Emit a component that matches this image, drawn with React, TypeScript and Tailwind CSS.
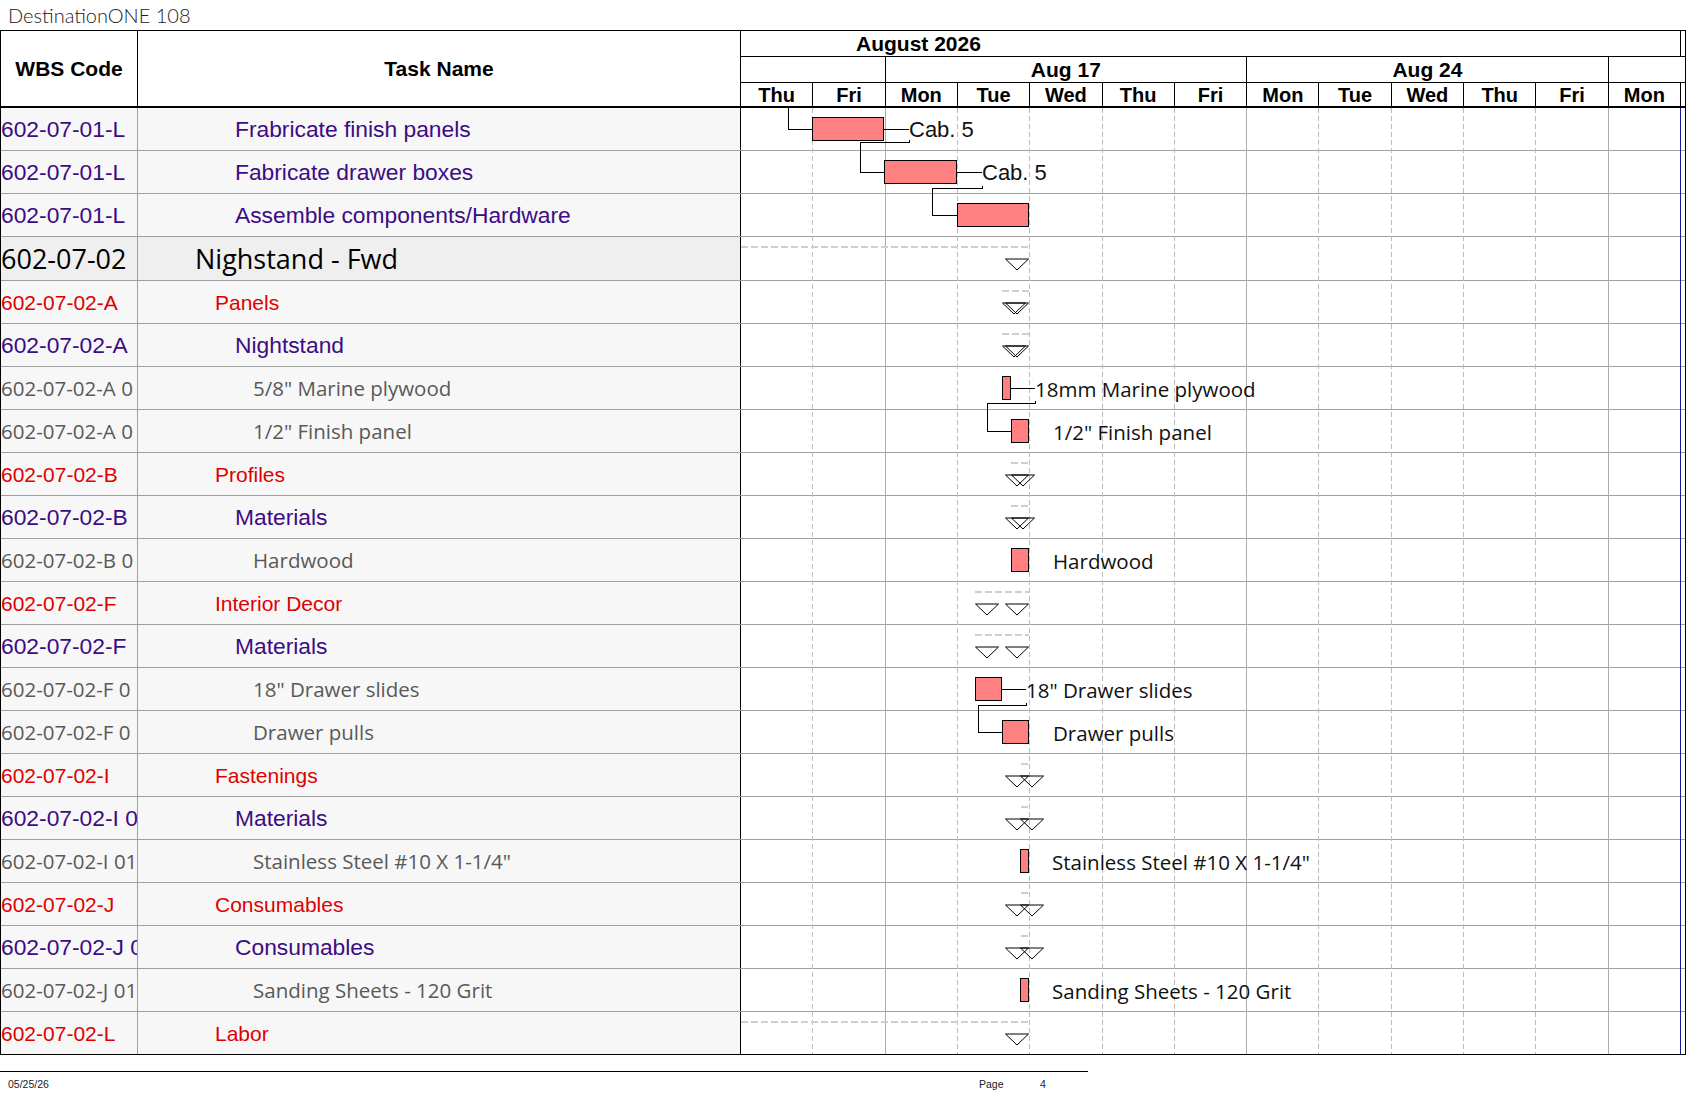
import React from 'react';

type Kind = 'p' | 'r' | 'g' | 's';

const rows: { wbs: string; name: string; kind: Kind }[] = [
  { wbs: '602-07-01-L', name: 'Frabricate finish panels', kind: 'p' },
  { wbs: '602-07-01-L', name: 'Fabricate drawer boxes', kind: 'p' },
  { wbs: '602-07-01-L', name: 'Assemble components/Hardware', kind: 'p' },
  { wbs: '602-07-02', name: 'Nighstand - Fwd', kind: 's' },
  { wbs: '602-07-02-A', name: 'Panels', kind: 'r' },
  { wbs: '602-07-02-A', name: 'Nightstand', kind: 'p' },
  { wbs: '602-07-02-A 0', name: '5/8" Marine plywood', kind: 'g' },
  { wbs: '602-07-02-A 0', name: '1/2" Finish panel', kind: 'g' },
  { wbs: '602-07-02-B', name: 'Profiles', kind: 'r' },
  { wbs: '602-07-02-B', name: 'Materials', kind: 'p' },
  { wbs: '602-07-02-B 0', name: 'Hardwood', kind: 'g' },
  { wbs: '602-07-02-F', name: 'Interior Decor', kind: 'r' },
  { wbs: '602-07-02-F', name: 'Materials', kind: 'p' },
  { wbs: '602-07-02-F 0', name: '18" Drawer slides', kind: 'g' },
  { wbs: '602-07-02-F 0', name: 'Drawer pulls', kind: 'g' },
  { wbs: '602-07-02-I', name: 'Fastenings', kind: 'r' },
  { wbs: '602-07-02-I 0', name: 'Materials', kind: 'p' },
  { wbs: '602-07-02-I 01', name: 'Stainless Steel #10 X 1-1/4"', kind: 'g' },
  { wbs: '602-07-02-J', name: 'Consumables', kind: 'r' },
  { wbs: '602-07-02-J 0', name: 'Consumables', kind: 'p' },
  { wbs: '602-07-02-J 01', name: 'Sanding Sheets - 120 Grit', kind: 'g' },
  { wbs: '602-07-02-L', name: 'Labor', kind: 'r' },
];

const textCls: Record<Kind, string> = {
  p: "text-[#3c0c84] text-[22.8px] font-['Liberation_Sans',Arial,sans-serif]",
  r: "text-[#e00000] text-[21px] font-['Liberation_Sans',Arial,sans-serif]",
  g: "text-[#595959] text-[20.5px] font-['Open_Sans',sans-serif]",
  s: "text-black text-[27px] font-['Open_Sans',sans-serif]",
};

const indentCls: Record<Kind, string> = {
  p: 'pl-[97px]',
  r: 'pl-[77px]',
  g: 'pl-[115px]',
  s: 'pl-[57px]',
};

const days = ['Thu', 'Fri', 'Mon', 'Tue', 'Wed', 'Thu', 'Fri', 'Mon', 'Tue', 'Wed', 'Thu', 'Fri', 'Mon'];

// row tops in page coordinates (header ends at 108)
const tops: number[] = [];
{
  let y = 108;
  rows.forEach((r) => {
    tops.push(y);
    y += r.kind === 's' ? 44 : 43;
  });
}

const X = (a: number) => a - 741;
const Y = (a: number) => a - 108;

const bars: { r: number; x1: number; x2: number }[] = [
  { r: 0, x1: 812.5, x2: 883.5 },
  { r: 1, x1: 884.5, x2: 956.5 },
  { r: 2, x1: 957.5, x2: 1028.5 },
  { r: 6, x1: 1002.5, x2: 1010.5 },
  { r: 7, x1: 1011.5, x2: 1028.5 },
  { r: 10, x1: 1011.5, x2: 1028.5 },
  { r: 13, x1: 975.5, x2: 1001.5 },
  { r: 14, x1: 1002.5, x2: 1028.5 },
  { r: 17, x1: 1020.5, x2: 1028.5 },
  { r: 20, x1: 1020.5, x2: 1028.5 },
];

const labels: { r: number; x: number; text: string; arial?: boolean }[] = [
  { r: 0, x: 909, text: 'Cab. 5', arial: true },
  { r: 1, x: 982, text: 'Cab. 5', arial: true },
  { r: 6, x: 1035, text: '18mm Marine plywood' },
  { r: 7, x: 1053, text: '1/2" Finish panel' },
  { r: 10, x: 1053, text: 'Hardwood' },
  { r: 13, x: 1026, text: '18" Drawer slides' },
  { r: 14, x: 1053, text: 'Drawer pulls' },
  { r: 17, x: 1052, text: 'Stainless Steel #10 X 1-1/4"' },
  { r: 20, x: 1052, text: 'Sanding Sheets - 120 Grit' },
];

const summaries: { r: number; from: number; tris: [number, number][] }[] = [
  { r: 3, from: 741, tris: [[1005.5, 1028.5]] },
  { r: 4, from: 1002, tris: [[1002.5, 1025.5], [1005.5, 1028.5]] },
  { r: 5, from: 1002, tris: [[1002.5, 1025.5], [1005.5, 1028.5]] },
  { r: 8, from: 1011, tris: [[1005.5, 1028.5], [1011.5, 1034.5]] },
  { r: 9, from: 1011, tris: [[1005.5, 1028.5], [1011.5, 1034.5]] },
  { r: 11, from: 975, tris: [[975.5, 998.5], [1005.5, 1028.5]] },
  { r: 12, from: 975, tris: [[975.5, 998.5], [1005.5, 1028.5]] },
  { r: 15, from: 1021, tris: [[1005.5, 1028.5], [1020.5, 1043.5]] },
  { r: 16, from: 1021, tris: [[1005.5, 1028.5], [1020.5, 1043.5]] },
  { r: 18, from: 1021, tris: [[1005.5, 1028.5], [1020.5, 1043.5]] },
  { r: 19, from: 1021, tris: [[1005.5, 1028.5], [1020.5, 1043.5]] },
  { r: 21, from: 741, tris: [[1005.5, 1028.5]] },
];

// connector paths in page coordinates
const links: string[] = [
  'M788.5 108 V129.5 H812.5',
  'M883.5 129.5 H909',
  'M909.5 140 V142.5 H860.5 V172.5 H884.5',
  'M956.5 172.5 H982',
  'M982.5 186 V188.5 H932.5 V215.5 H957.5',
  'M1010.5 388.5 H1035',
  'M1035.5 401 V403.5 H987.5 V431.5 H1011.5',
  'M1001.5 689.5 H1026',
  'M1026.5 703 V705.5 H978.5 V732.5 H1002.5',
];

function shift(d: string) {
  // page coords -> svg coords for the simple M/V/H paths above
  return d.replace(/([MVH])([\d.]+)(?: ([\d.]+))?/g, (_m, c, a, b) => {
    if (c === 'M') return `M${X(parseFloat(a))} ${Y(parseFloat(b))}`;
    if (c === 'V') return `V${Y(parseFloat(a))}`;
    return `H${X(parseFloat(a))}`;
  });
}

function Gantt() {
  const h = 946;
  return (
    <svg
      className="absolute left-[740px] top-0 w-[944px] h-[946px]"
      viewBox={`0 0 944 ${h}`}
      shapeRendering="crispEdges"
    >
      {Array.from({ length: 12 }, (_, i) => {
        const k = i + 1;
        const x = Math.round((940 * k) / 13) - 0.5;
        const week = k === 2 || k === 7 || k === 12;
        return week ? (
          <line key={k} x1={x} y1={0} x2={x} y2={h} stroke="#ababab" strokeWidth={1} />
        ) : (
          <line key={k} x1={x} y1={0} x2={x} y2={h} stroke="#bcbcbc" strokeWidth={1} strokeDasharray="5 3" />
        );
      })}
      <line x1={939.5} y1={0} x2={939.5} y2={h} stroke="#1a1a96" strokeWidth={1.2} />

      {summaries.map((s) => {
        const t = tops[s.r];
        return (
          <g key={s.r}>
            <line x1={X(s.from)} y1={Y(t + 9.5)} x2={X(1029)} y2={Y(t + 9.5)} stroke="#cfcfcf" strokeWidth={2} strokeDasharray="7 3" />
            {s.tris.map(([a, b], j) => (
              <polygon
                key={j}
                points={`${X(a)},${Y(t + 22)} ${X(b)},${Y(t + 22)} ${X((a + b) / 2)},${Y(t + 33)}`}
                fill="none"
                stroke="#000"
                strokeWidth={1}
                shapeRendering="auto"
              />
            ))}
          </g>
        );
      })}

      {links.map((d, i) => (
        <path key={i} d={shift(d)} fill="none" stroke="#000" strokeWidth={1} />
      ))}

      {bars.map((b) => {
        const t = tops[b.r];
        return (
          <rect
            key={b.r}
            x={X(b.x1)}
            y={Y(t + 9.5)}
            width={b.x2 - b.x1}
            height={23}
            fill="#ff8080"
            stroke="#000"
            strokeWidth={1}
          />
        );
      })}

      {labels.map((l) => {
        const t = tops[l.r];
        return (
          <text
            key={l.r}
            x={X(l.x)}
            y={Y(t + (l.arial ? 29 : 29.5))}
            fontSize={l.arial ? 22 : 20.5}
            fontFamily={l.arial ? "'Liberation Sans', Arial, sans-serif" : "'Open Sans', sans-serif"}
            fill="#111"
          >
            {l.text}
          </text>
        );
      })}
    </svg>
  );
}

function Header() {
  return (
    <div className="flex h-[77px] border-b-2 border-black font-['Liberation_Sans',Arial,sans-serif] font-bold text-black">
      <div className="w-[137px] shrink-0 border-r border-black flex items-center justify-center text-[21px] leading-none">
        WBS Code
      </div>
      <div className="w-[603px] shrink-0 border-r border-black flex items-center justify-center text-[21px] leading-none">
        Task Name
      </div>
      <div className="w-[944px] flex flex-col">
        <div className="h-[26px] border-b border-black flex">
          <div className="w-[940px] border-r border-black flex items-center pl-[115px] text-[21px] leading-none">
            August 2026
          </div>
        </div>
        <div className="h-[26px] border-b border-black flex">
          <div className="w-[940px] grid grid-cols-13">
            <div className="col-span-2 border-r border-black" />
            <div className="col-span-5 border-r border-black flex items-center justify-center text-[21px] leading-none">
              Aug 17
            </div>
            <div className="col-span-5 border-r border-black flex items-center justify-center text-[21px] leading-none">
              Aug 24
            </div>
            <div className="col-span-1" />
          </div>
        </div>
        <div className="h-[23px] flex">
          <div className="w-[940px] grid grid-cols-13">
            {days.map((d, i) => (
              <div key={i} className="border-r border-black flex items-center justify-center text-[20px] leading-none">
                {d}
              </div>
            ))}
          </div>
        </div>
      </div>
    </div>
  );
}

function Body() {
  return (
    <div className="relative">
      {rows.map((r, i) => {
        const last = i === rows.length - 1;
        const s = r.kind === 's';
        const rowCls = last
          ? 'h-[42px]'
          : s
          ? 'h-[44px] border-b border-[#a0a0a0]'
          : 'h-[43px] border-b border-[#a0a0a0]';
        const bg = s ? 'bg-[#efefef]' : 'bg-[#f7f7f7]';
        return (
          <div key={i} className={`flex ${rowCls}`}>
            <div
              className={`w-[137px] shrink-0 border-r border-[#a0a0a0] overflow-hidden whitespace-nowrap flex items-center leading-none ${bg} ${textCls[r.kind]}`}
            >
              {r.wbs}
            </div>
            <div
              className={`w-[603px] shrink-0 border-r border-black overflow-hidden whitespace-nowrap flex items-center leading-none ${bg} ${indentCls[r.kind]} ${textCls[r.kind]}`}
            >
              {r.name}
            </div>
            <div className="flex-1 bg-white" />
          </div>
        );
      })}
      <Gantt />
    </div>
  );
}

export default function App() {
  return (
    <div className="w-[1687px] h-[1097px] bg-white overflow-hidden">
      <div className="h-[30px] pl-[8px] pt-[3px] text-[20px] leading-[24px] font-light text-[#222] font-['Lato',sans-serif]">
        DestinationONE 108
      </div>
      <div className="w-[1686px] border border-black">
        <Header />
        <Body />
      </div>
      <div className="mt-[16px] w-[1088px] border-t border-black h-[24px] flex items-start pt-[7px] text-[10.5px] leading-none text-[#222] font-['Liberation_Sans',Arial,sans-serif]">
        <span className="w-[979px] pl-[8px]">05/25/26</span>
        <span className="w-[61px]">Page</span>
        <span>4</span>
      </div>
    </div>
  );
}
